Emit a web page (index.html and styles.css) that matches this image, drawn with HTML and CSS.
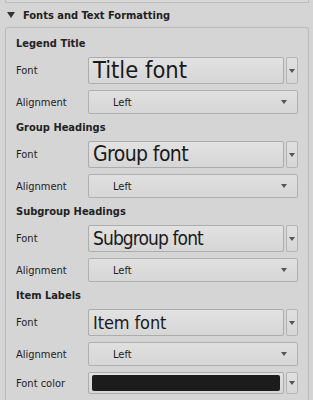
FILE: index.html
```html
<!DOCTYPE html>
<html>
<head>
<meta charset="utf-8">
<link rel="stylesheet" href="styles.css">
</head>
<body>
<div class="prev-box"></div>
<div class="section-header">
  <span class="caret"></span>
  <span class="section-title">Fonts and Text Formatting</span>
</div>
<div class="group">
  <div class="heading">Legend Title</div>
  <div class="row font-row">
    <span class="label">Font</span>
    <div class="font-field">
      <div class="font-btn"><span class="big big-title">Title font</span></div>
      <div class="menu-btn"><span class="arrow"></span></div>
    </div>
  </div>
  <div class="row align-row">
    <span class="label">Alignment</span>
    <div class="combo"><span class="combo-text">Left</span><span class="arrow"></span></div>
  </div>

  <div class="heading">Group Headings</div>
  <div class="row font-row">
    <span class="label">Font</span>
    <div class="font-field">
      <div class="font-btn"><span class="big big-group">Group font</span></div>
      <div class="menu-btn"><span class="arrow"></span></div>
    </div>
  </div>
  <div class="row align-row">
    <span class="label">Alignment</span>
    <div class="combo"><span class="combo-text">Left</span><span class="arrow"></span></div>
  </div>

  <div class="heading">Subgroup Headings</div>
  <div class="row font-row">
    <span class="label">Font</span>
    <div class="font-field">
      <div class="font-btn"><span class="big big-subgroup">Subgroup font</span></div>
      <div class="menu-btn"><span class="arrow"></span></div>
    </div>
  </div>
  <div class="row align-row">
    <span class="label">Alignment</span>
    <div class="combo"><span class="combo-text">Left</span><span class="arrow"></span></div>
  </div>

  <div class="heading">Item Labels</div>
  <div class="row font-row">
    <span class="label">Font</span>
    <div class="font-field">
      <div class="font-btn"><span class="big big-item">Item font</span></div>
      <div class="menu-btn"><span class="arrow"></span></div>
    </div>
  </div>
  <div class="row align-row">
    <span class="label">Alignment</span>
    <div class="combo"><span class="combo-text">Left</span><span class="arrow"></span></div>
  </div>
  <div class="row color-row">
    <span class="label">Font color</span>
    <div class="font-field">
      <div class="color-btn"><div class="swatch"></div></div>
      <div class="menu-btn"><span class="arrow"></span></div>
    </div>
  </div>
</div>
</body>
</html>
```

FILE: styles.css
```css
html, body {
  margin: 0;
  padding: 0;
  background: #d5d5d5;
  width: 313px;
  height: 400px;
  overflow: hidden;
}
body {
  font-family: "DejaVu Sans Condensed", "DejaVu Sans", sans-serif;
  font-stretch: condensed;
  font-size: 11px;
  color: #1e1e1e;
}
.prev-box {
  margin: 0 4px 0 5px;
  height: 2px;
  border: 1px solid #bcbcbc;
  border-top: none;
  background: #d8d8d8;
}
.section-header {
  height: 24px;
  display: flex;
  align-items: center;
  padding-left: 7px;
  gap: 8px;
}
.caret {
  width: 0;
  height: 0;
  border-left: 4px solid transparent;
  border-right: 4px solid transparent;
  border-top: 6px solid #333;
}
.section-title {
  font-weight: bold;
  font-size: 11px;
  color: #222;
}
.group {
  margin: 0 4px 0 5px;
  border: 1px solid #bababa;
  border-bottom: none;
  border-radius: 3px 3px 0 0;
  padding: 8px 10px 20px 10px;
  display: flex;
  flex-direction: column;
  gap: 6px;
}
.heading {
  font-weight: bold;
  height: 15px;
  line-height: 15px;
  color: #222;
}
.row {
  display: grid;
  grid-template-columns: 72px 1fr;
  align-items: center;
}
.label {
  font-size: 11px;
  color: #222;
}
.font-row { height: 27px; }
.align-row { height: 24px; }
.color-row { height: 22px; }
.font-field {
  display: flex;
  gap: 2px;
  height: 100%;
}
.font-btn, .color-btn {
  flex: 1;
  border: 1px solid #acacac;
  border-radius: 2px;
  background: linear-gradient(#e2e2e2, #d6d6d6);
  display: flex;
  align-items: center;
  padding-left: 4px;
}
.big {
  color: #1a1a1a;
  line-height: 1;
}
.big-title { font-size: 23.5px; }
.big-group { font-size: 21px; letter-spacing: -0.6px; }
.big-subgroup { font-size: 19px; letter-spacing: -0.9px; }
.big-item { font-size: 18px; letter-spacing: -0.1px; }
.menu-btn {
  width: 10px;
  border: 1px solid #b4b4b4;
  border-radius: 2px;
  background: linear-gradient(#e0e0e0, #d6d6d6);
  display: flex;
  align-items: center;
  justify-content: center;
}
.arrow {
  width: 0;
  height: 0;
  border-left: 3.5px solid transparent;
  border-right: 3.5px solid transparent;
  border-top: 4px solid #555;
}
.combo {
  height: 100%;
  box-sizing: border-box;
  border: 1px solid #b0b0b0;
  border-radius: 2px;
  background: linear-gradient(#e0e0e0, #d6d6d6);
  display: flex;
  align-items: center;
  justify-content: space-between;
  padding: 0 10px 0 24px;
}
.combo-text {
  color: #222;
}
.color-btn {
  padding: 2px 3px;
}
.swatch {
  flex: 1;
  height: 100%;
  background: #1c1c1c;
  border-radius: 2px;
}
```
